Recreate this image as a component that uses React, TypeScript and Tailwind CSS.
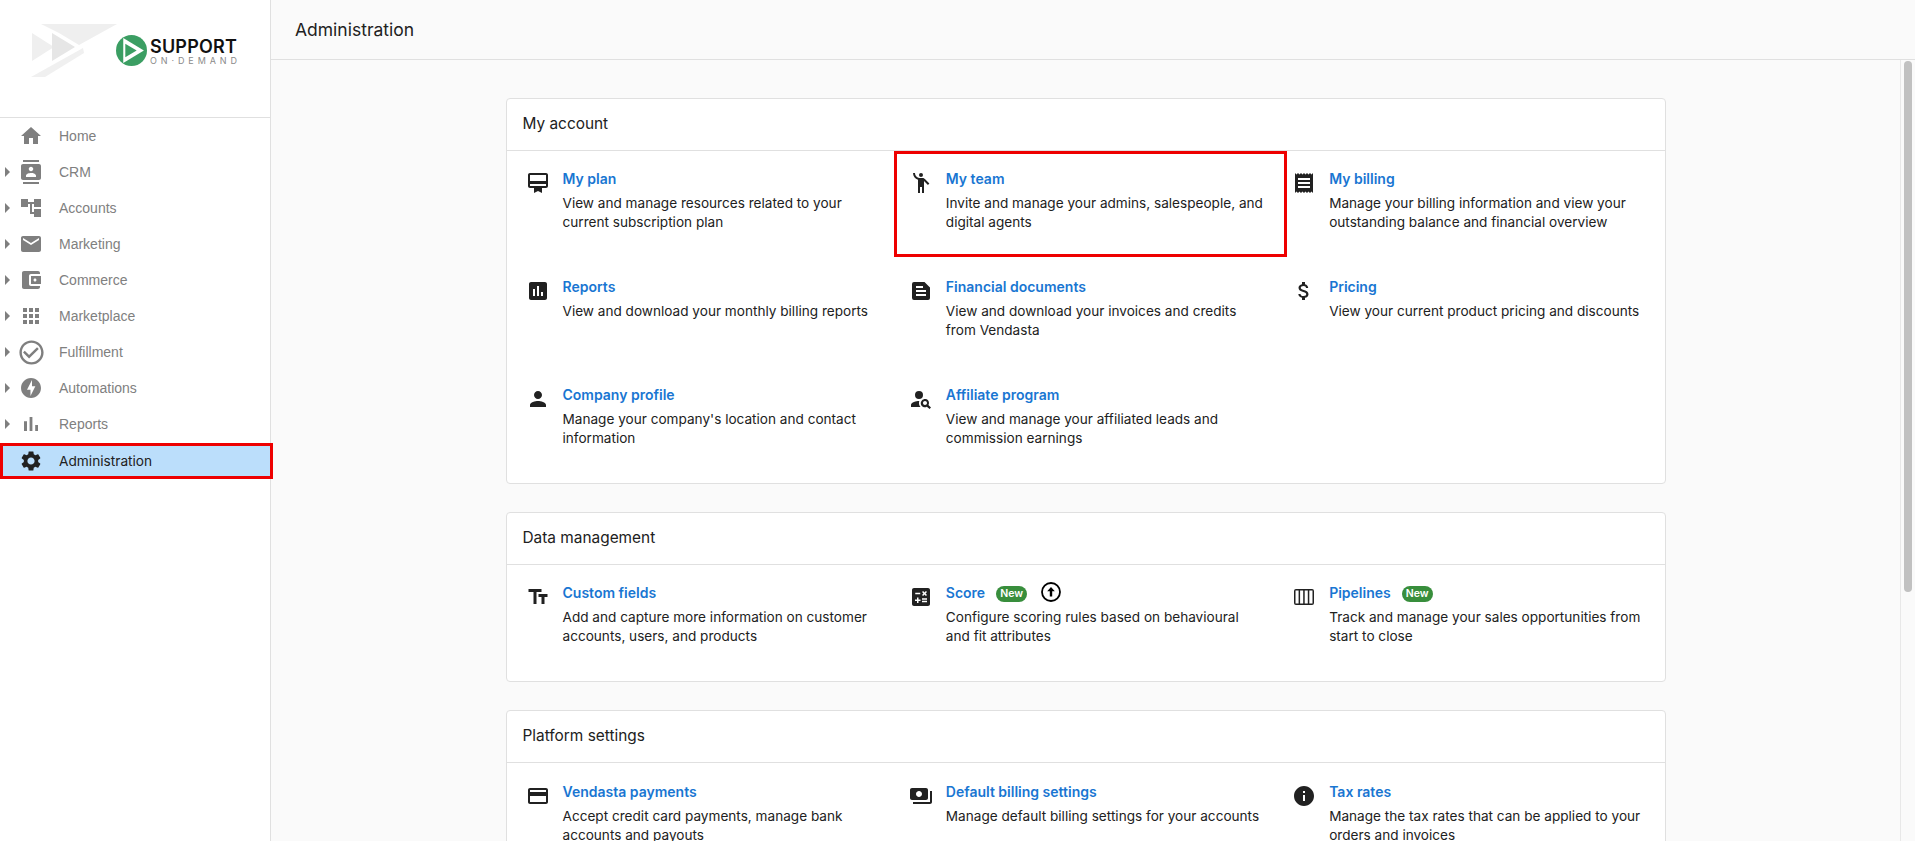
import type { ReactNode } from "react";

const P = {
  home: "M10 20v-6h4v6h5v-8h3L12 3 2 12h3v8z",
  crm: "M20 0H4v2h16V0zM4 24h16v-2H4v2zM20 4H4c-1.1 0-2 .9-2 2v12c0 1.1.9 2 2 2h16c1.1 0 2-.9 2-2V6c0-1.1-.9-2-2-2zm-8 2.75c1.24 0 2.25 1.01 2.25 2.25s-1.01 2.25-2.25 2.25S9.75 10.24 9.75 9 10.76 6.75 12 6.75zM17 17H7v-1.5c0-1.67 3.33-2.5 5-2.5s5 .83 5 2.5V17z",
  accounts: "M22 11V3h-7v3H9V3H2v8h7V8h2v10h4v3h7v-8h-7v3h-2V8h2v3z",
  mail: "M20 4H4c-1.1 0-1.99.9-1.99 2L2 18c0 1.1.9 2 2 2h16c1.1 0 2-.9 2-2V6c0-1.1-.9-2-2-2zm0 4l-8 5-8-5V6l8 5 8-5v2z",
  wallet: "M21 18v1c0 1.1-.9 2-2 2H5c-1.11 0-2-.9-2-2V5c0-1.1.89-2 2-2h14c1.1 0 2 .9 2 2v1h-9c-1.11 0-2 .9-2 2v8c0 1.1.89 2 2 2h9zm-9-2h10V8H12v8zm4-2.5c-.83 0-1.5-.67-1.5-1.5s.67-1.5 1.5-1.5 1.5.67 1.5 1.5-.67 1.5-1.5 1.5z",
  apps: "M4 8h4V4H4v4zm6 12h4v-4h-4v4zm-6 0h4v-4H4v4zm0-6h4v-4H4v4zm6 0h4v-4h-4v4zm6-10v4h4V4h-4zm-6 4h4V4h-4v4zm6 6h4v-4h-4v4zm0 6h4v-4h-4v4z",
  check: "M16.59 7.58L10 14.17l-3.59-3.58L5 12l5 5 8-8zM12 2C6.48 2 2 6.48 2 12s4.48 10 10 10 10-4.48 10-10S17.52 2 12 2zm0 18c-4.42 0-8-3.58-8-8s3.58-8 8-8 8 3.58 8 8-3.58 8-8 8z",
  bolt: "M12 2.02c-5.51 0-9.98 4.47-9.98 9.98s4.47 9.98 9.98 9.98 9.98-4.47 9.98-9.98S17.51 2.02 12 2.02zM11.48 20v-6.26H8L13 4v6.26h3.35L11.48 20z",
  bars: "M5 9.2h3V19H5zM10.6 5h2.8v14h-2.8zm5.6 8H19v6h-2.8z",
  gear: "M19.14 12.94c.04-.3.06-.61.06-.94 0-.32-.02-.64-.07-.94l2.03-1.58c.18-.14.23-.41.12-.61l-1.92-3.32c-.12-.22-.37-.29-.59-.22l-2.39.96c-.5-.38-1.03-.7-1.62-.94l-.36-2.54c-.04-.24-.24-.41-.48-.41h-3.84c-.24 0-.43.17-.47.41l-.36 2.54c-.59.24-1.13.57-1.62.94l-2.39-.96c-.22-.08-.47 0-.59.22L2.74 8.87c-.12.21-.08.47.12.61l2.03 1.58c-.05.3-.09.63-.09.94s.02.64.07.94l-2.03 1.58c-.18.14-.23.41-.12.61l1.92 3.32c.12.22.37.29.59.22l2.39-.96c.5.38 1.03.7 1.62.94l.36 2.54c.05.24.24.41.48.41h3.84c.24 0 .44-.17.47-.41l.36-2.54c.59-.24 1.13-.56 1.62-.94l2.39.96c.22.08.47 0 .59-.22l1.92-3.32c.12-.22.07-.47-.12-.61l-2.01-1.58zM12 15.6c-1.98 0-3.6-1.62-3.6-3.6s1.62-3.6 3.6-3.6 3.6 1.62 3.6 3.6-1.62 3.6-3.6 3.6z",
  plan: "M20 2H4c-1.11 0-2 .89-2 2v11c0 1.11.89 2 2 2h4v5l4-2 4 2v-5h4c1.11 0 2-.89 2-2V4c0-1.11-.89-2-2-2zm0 13H4v-2h16v2zm0-5H4V4h16v6z",
  team: "M14 4a2 2 0 1 1-4 0 2 2 0 0 1 4 0zM15.89 8.11C15.5 7.72 14.83 7 13.53 7h-2.54C8.24 6.99 6 4.75 6 2H4c0 3.16 2.11 5.84 5 6.71V22h2v-6h2v6h2V10.05L18.95 14l1.41-1.41-4.47-4.48z",
  receipt: "M18 17H6v-2h12v2zm0-4H6v-2h12v2zm0-4H6V7h12v2zM3 22l1.5-1.5L6 22l1.5-1.5L9 22l1.5-1.5L12 22l1.5-1.5L15 22l1.5-1.5L18 22l1.5-1.5L21 22V2l-1.5 1.5L18 2l-1.5 1.5L15 2l-1.5 1.5L12 2l-1.5 1.5L9 2 7.5 3.5 6 2 4.5 3.5 3 2v20z",
  assess: "M19 3H5c-1.1 0-2 .9-2 2v14c0 1.1.9 2 2 2h14c1.1 0 2-.9 2-2V5c0-1.1-.9-2-2-2zM9 17H7v-7h2v7zm4 0h-2V7h2v10zm4 0h-2v-4h2v4z",
  doc: "M5 3h10.5L21 8.5V19a2 2 0 0 1-2 2H5a2 2 0 0 1-2-2V5a2 2 0 0 1 2-2zM7 7v2h7V7zM7 11v2h10v-2zM7 15v2h10v-2z",
  money: "M11.8 10.9c-2.27-.59-3-1.2-3-2.15 0-1.09 1.01-1.85 2.7-1.85 1.78 0 2.44.85 2.5 2.1h2.21c-.07-1.72-1.12-3.3-3.21-3.81V3h-3v2.16c-1.94.42-3.5 1.68-3.5 3.61 0 2.31 1.91 3.46 4.7 4.13 2.5.6 3 1.48 3 2.41 0 .69-.49 1.79-2.7 1.79-2.06 0-2.87-.92-2.98-2.1h-2.2c.12 2.19 1.76 3.42 3.68 3.83V21h3v-2.15c1.95-.37 3.5-1.5 3.5-3.55 0-2.84-2.43-3.81-4.7-4.4z",
  person: "M12 12c2.21 0 4-1.79 4-4s-1.79-4-4-4-4 1.79-4 4 1.79 4 4 4zm0 2c-2.67 0-8 1.34-8 4v2h16v-2c0-2.66-5.33-4-8-4z",
  personSearch: "M14 8a4 4 0 1 1-8 0 4 4 0 0 1 8 0zM10.35 14.01C7.62 13.91 2 15.27 2 18v2h9.54c-2.47-2.76-1.23-5.89-1.19-5.99zM19.43 18.02c.47-.8.7-1.77.51-2.82-.3-1.67-1.69-3-3.37-3.17-2.75-.28-5.05 2-4.77 4.77.18 1.7 1.5 3.07 3.17 3.37 1.05.19 2.02-.04 2.82-.51L20.59 22 22 20.59l-2.57-2.57zM16 18c-1.1 0-2-.9-2-2s.9-2 2-2 2 .9 2 2-.9 2-2 2z",
  text: "M2.5 4v3h5v12h3V7h5V4h-13zm19 5h-9v3h3v7h3v-7h3V9z",
  calc: "M19 3H5c-1.1 0-2 .9-2 2v14c0 1.1.9 2 2 2h14c1.1 0 2-.9 2-2V5c0-1.1-.9-2-2-2zm-5.97 4.06L14.09 6l1.41 1.41L16.91 6l1.06 1.06-1.41 1.41 1.41 1.41-1.06 1.06-1.41-1.4-1.41 1.41-1.06-1.06 1.41-1.41-1.41-1.42zm-6.78.66h5v1.5h-5v-1.5zM11.5 16h-2v2H8v-2H6v-1.5h2v-2h1.5v2h2V16zm6.5 1.25h-5v-1.5h5v1.5zm0-2.5h-5v-1.5h5v1.5z",
  pipelines: "M4 4h16a2 2 0 0 1 2 2v12a2 2 0 0 1-2 2H4a2 2 0 0 1-2-2V6a2 2 0 0 1 2-2zM3.5 5.5v13h3.1v-13zM8.1 5.5v13h3.1v-13zM12.7 5.5v13h3.1v-13zM17.3 5.5v13h3.2v-13z",
  card: "M20 4H4c-1.11 0-1.99.89-1.99 2L2 18c0 1.11.89 2 2 2h16c1.11 0 2-.89 2-2V6c0-1.11-.89-2-2-2zm0 14H4v-6h16v6zm0-10H4V6h16v2z",
  payments: "M19 14V6c0-1.1-.9-2-2-2H3c-1.1 0-2 .9-2 2v8c0 1.1.9 2 2 2h14c1.1 0 2-.9 2-2zm-9-1c-1.66 0-3-1.34-3-3s1.34-3 3-3 3 1.34 3 3-1.34 3-3 3zm13-6v11c0 1.1-.9 2-2 2H4v-2h17V7h2z",
  info: "M12 2C6.48 2 2 6.48 2 12s4.48 10 10 10 10-4.48 10-10S17.52 2 12 2zm1 15h-2v-6h2v6zm0-8h-2V7h2v2z",
};

function Icon({ d, className }: { d: string; className?: string }) {
  return (
    <svg viewBox="0 0 24 24" fill="currentColor" className={className}>
      <path fillRule="evenodd" d={d} />
    </svg>
  );
}

const navItems = [
  { label: "Home", icon: P.home },
  { label: "CRM", icon: P.crm, caret: true },
  { label: "Accounts", icon: P.accounts, caret: true },
  { label: "Marketing", icon: P.mail, caret: true },
  { label: "Commerce", icon: P.wallet, caret: true },
  { label: "Marketplace", icon: P.apps, caret: true },
  { label: "Fulfillment", icon: P.check, caret: true, big: true },
  { label: "Automations", icon: P.bolt, caret: true },
  { label: "Reports", icon: P.bars, caret: true },
];

function Logo() {
  return (
    <div className="flex items-start h-[118px] border-b border-[#e0e0e0]">
      {/* faded arrows behind the brand mark */}
      <svg viewBox="0 0 86 54" className="w-[86px] h-[54px] ml-[31px] mt-[24px] shrink-0">
        <polygon points="10,0 86,0 48,21 28,9" fill="#efefef" />
        <polygon points="1,9 23,23 1,37" fill="#efefef" />
        <polygon points="21,9 44,23 21,37" fill="#e6e6e6" />
        <polygon points="0,53 52,24 53,29 14,53" fill="#f0f0f0" />
      </svg>
      <svg viewBox="0 0 30 30" className="w-[31px] h-[31px] -ml-[1px] mt-[35px] shrink-0">
        <circle cx="15" cy="15" r="15" fill="#3b9e63" />
        <polygon points="7,3 27,15 7,27" fill="#ffffff" />
        <polygon points="9,8.5 20,15 9,21.5" fill="#3b9e63" />
      </svg>
      <div className="ml-[3px] mt-[38px] flex flex-col font-['Inter',sans-serif]">
        <span className="text-[18px] leading-[18px] font-semibold tracking-[0.2px] text-[#111111]">SUPPORT</span>
        <span className="text-[9px] leading-[9px] tracking-[3.9px] text-[#8a8a8a] whitespace-nowrap">ON·DEMAND</span>
      </div>
    </div>
  );
}

function Sidebar() {
  return (
    <aside className="w-[271px] shrink-0 h-full bg-white border-r border-[#e0e0e0] relative z-10">
      <Logo />
      <nav>
        {navItems.map((n) => (
          <div key={n.label} className="flex items-center h-[36px] relative font-['Liberation_Sans',Arial,sans-serif]">
            <div className="w-[19px] shrink-0 pl-[5px]">
              {n.caret && <div className="w-0 h-0 border-y-[5px] border-y-transparent border-l-[5px] border-l-[#7f7f7f]" />}
            </div>
            <div className="w-[24px] h-[24px] shrink-0 flex items-center justify-center text-[#7f7f7f]">
              <Icon d={n.icon} className={n.big ? "w-[29px] h-[29px] shrink-0" : "w-[24px] h-[24px] shrink-0"} />
            </div>
            <span className="ml-[16px] text-[14px] text-[#808080]">{n.label}</span>
          </div>
        ))}
        <div className="flex items-center w-[273px] h-[36px] mt-[1px] border-[3px] border-[#ee0000] bg-[#bbdefb] text-[#212121] font-['Inter',sans-serif]">
          <div className="w-[16px] shrink-0" />
          <Icon d={P.gear} className="w-[24px] h-[24px] shrink-0" />
          <span className="ml-[16px] text-[13.7px]">Administration</span>
        </div>
      </nav>
    </aside>
  );
}

function Badge() {
  return (
    <span className="inline-flex items-center justify-center w-[31px] h-[16px] mt-[4px] rounded-full bg-[#388e3c] text-white text-[10.5px] font-semibold">
      New
    </span>
  );
}

function Item({
  icon,
  title,
  desc,
  extra,
  overlay,
}: {
  icon: string;
  title: string;
  desc: string;
  extra?: ReactNode;
  overlay?: boolean;
}) {
  return (
    <div className="relative h-[108px] flex pl-[15px] pt-[17px]">
      {overlay && <div className="absolute left-0 top-0 w-[393px] h-[106px] border-[3px] border-[#ee0000]" />}
      <Icon d={icon} className="w-[24px] h-[24px] shrink-0 text-[#212121] mt-[3px]" />
      <div className="ml-[13px] flex-1 pr-[13px]">
        <div className="flex items-center h-[20px] gap-[11px]">
          <span className="text-[14px] font-semibold text-[#1976d2]">{title}</span>
          {extra}
        </div>
        <p className="mt-[6px] text-[13.6px] leading-[19.4px] text-[#212121]">{desc}</p>
      </div>
    </div>
  );
}

function Section({ title, nudge, children }: { title: string; nudge?: boolean; children: ReactNode }) {
  return (
    <section className="w-[1160px] mx-auto mb-[28px] bg-white border border-[#e0e0e0] rounded-[4px]">
      <h2 className="h-[52px] flex items-center px-[16px] pb-[1px] text-[15.4px] font-normal text-[#212121] border-b border-[#e0e0e0]">
        {title}
      </h2>
      <div className={nudge ? "grid grid-cols-3 px-[4px] pt-[1px] pb-[8px]" : "grid grid-cols-3 px-[4px] pb-[8px]"}>{children}</div>
    </section>
  );
}

export default function App() {
  return (
    <div className="flex w-[1915px] h-[841px] overflow-hidden bg-[#fafafa] font-['Inter',sans-serif]">
      <Sidebar />
      <main className="flex-1 flex flex-col min-w-0">
        <header className="h-[60px] shrink-0 flex items-center pl-[24px] pt-[1px] border-b border-[#e0e0e0] text-[17.5px] text-[#212121]">
          Administration
        </header>
        <div className="flex-1 flex min-h-0">
          <div className="flex-1 overflow-hidden pt-[38px]">
            <Section title="My account">
              <Item icon={P.plan} title="My plan" desc="View and manage resources related to your current subscription plan" />
              <Item icon={P.team} title="My team" desc="Invite and manage your admins, salespeople, and digital agents" overlay />
              <Item icon={P.receipt} title="My billing" desc="Manage your billing information and view your outstanding balance and financial overview" />
              <Item icon={P.assess} title="Reports" desc="View and download your monthly billing reports" />
              <Item icon={P.doc} title="Financial documents" desc="View and download your invoices and credits from Vendasta" />
              <Item icon={P.money} title="Pricing" desc="View your current product pricing and discounts" />
              <Item icon={P.person} title="Company profile" desc="Manage your company's location and contact information" />
              <Item icon={P.personSearch} title="Affiliate program" desc="View and manage your affiliated leads and commission earnings" />
            </Section>
            <Section title="Data management">
              <Item icon={P.text} title="Custom fields" desc="Add and capture more information on customer accounts, users, and products" />
              <Item
                icon={P.calc}
                title="Score"
                desc="Configure scoring rules based on behavioural and fit attributes"
                extra={
                  <>
                    <Badge />
                    <svg viewBox="0 0 20 20" className="w-[20px] h-[20px] ml-[3px] shrink-0">
                      <circle cx="10" cy="10" r="9" fill="none" stroke="#000000" strokeWidth="1.8" />
                      <path d="M10 5l3.8 4.2h-2.6v5.3H8.8V9.2H6.2z" fill="#000000" />
                    </svg>
                  </>
                }
              />
              <Item icon={P.pipelines} title="Pipelines" desc="Track and manage your sales opportunities from start to close" extra={<Badge />} />
            </Section>
            <Section title="Platform settings" nudge>
              <Item icon={P.card} title="Vendasta payments" desc="Accept credit card payments, manage bank accounts and payouts" />
              <Item icon={P.payments} title="Default billing settings" desc="Manage default billing settings for your accounts" />
              <Item icon={P.info} title="Tax rates" desc="Manage the tax rates that can be applied to your orders and invoices" />
            </Section>
          </div>
          <div className="w-[15px] shrink-0 border-l border-[#e8e8e8] pl-[3px] pt-[1px]">
            <div className="w-[8px] h-[531px] rounded-full bg-[#c1c1c1]" />
          </div>
        </div>
      </main>
    </div>
  );
}
